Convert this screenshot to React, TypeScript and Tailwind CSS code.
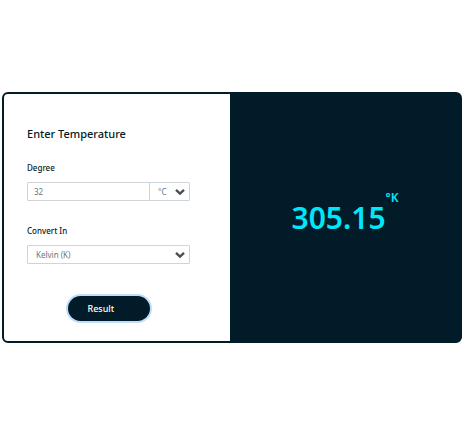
import { useState } from "react";

function Chevron() {
  return (
    <svg
      viewBox="0 0 10 7"
      className="pointer-events-none absolute top-1/2 right-1 h-[7px] w-[10px] -translate-y-1/2"
      fill="none"
      stroke="#495057"
      strokeWidth="2.4"
      aria-hidden="true"
    >
      <path d="M1 1.3l4 3.8 4-3.8" />
    </svg>
  );
}

export default function App() {
  const [degree, setDegree] = useState("32");
  const [unit, setUnit] = useState("C");
  const [target, setTarget] = useState("K");
  const [result, setResult] = useState({ value: "305.15", unit: "K" });

  const convert = () => {
    const n = Number(degree);
    const celsius = unit === "C" ? n : unit === "F" ? ((n - 32) * 5) / 9 : n - 273.15;
    const out =
      target === "C" ? celsius : target === "F" ? (celsius * 9) / 5 + 32 : celsius + 273.15;
    setResult({ value: out.toFixed(2), unit: target });
  };

  return (
    <main className="flex min-h-screen flex-col bg-white px-0.5 pt-[92px] font-['Segoe_UI','Noto_Sans',sans-serif] text-[#021b28]">
      <section className="grid grid-cols-[minmax(0,226fr)_minmax(0,230fr)] rounded-md border-2 border-[#021b28]">
        <form
          className="flex flex-col pt-8 pr-10 pb-5 pl-[23px]"
          onSubmit={(e) => {
            e.preventDefault();
            convert();
          }}
        >
          <h1 className="text-[11px] leading-4 font-medium">Enter Temperature</h1>

          <label htmlFor="degree" className="mt-5 text-[8px] leading-3 font-medium">
            Degree
          </label>
          <div className="mt-2 flex h-[19px] rounded-[1px] border border-[#ced4da] text-[8px] text-[#6c757d]">
            <input
              id="degree"
              type="text"
              inputMode="decimal"
              value={degree}
              onChange={(e) => setDegree(e.target.value)}
              className="min-w-0 flex-1 px-1.5 outline-none"
            />
            <div className="relative w-10 border-l border-[#ced4da]">
              <select
                aria-label="Degree unit"
                value={unit}
                onChange={(e) => setUnit(e.target.value)}
                className="h-full w-full appearance-none bg-transparent pl-2 outline-none"
              >
                <option value="C">°C</option>
                <option value="F">°F</option>
                <option value="K">K</option>
              </select>
              <Chevron />
            </div>
          </div>

          <label htmlFor="target" className="mt-6 text-[8px] leading-3 font-medium">
            Convert In
          </label>
          <div className="relative mt-2 h-[19px] rounded-[1px] border border-[#ced4da] text-[8px] text-[#6c757d]">
            <select
              id="target"
              value={target}
              onChange={(e) => setTarget(e.target.value)}
              className="h-full w-full appearance-none bg-transparent pl-2 outline-none"
            >
              <option value="K">Kelvin (K)</option>
              <option value="C">Celsius (°C)</option>
              <option value="F">Fahrenheit (°F)</option>
            </select>
            <Chevron />
          </div>

          <button
            type="submit"
            className="mt-8 h-[25px] w-[82px] self-center rounded-full bg-[#021b28] pl-5 text-left text-[9px] font-medium text-white ring-2 ring-[#bfdeff]"
          >
            Result
          </button>
        </form>

        <output
          htmlFor="degree target"
          className="flex items-center justify-center bg-[#021b28] text-[#00e7fb]"
        >
          <span className="text-[30px] leading-10 font-semibold">{result.value}</span>
          <span className="mb-10 text-[12px] leading-4 font-semibold">°{result.unit}</span>
        </output>
      </section>
    </main>
  );
}
